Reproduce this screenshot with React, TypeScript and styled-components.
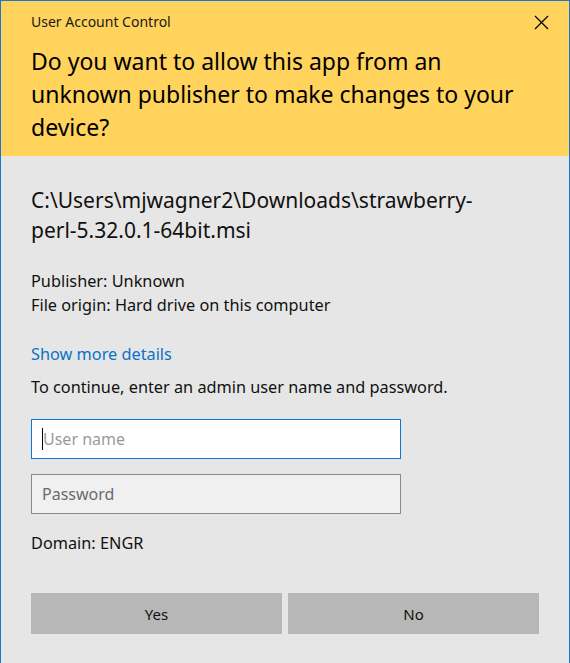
import React from "react";
import styled, { createGlobalStyle } from "styled-components";

const Global = createGlobalStyle`
  html, body { margin: 0; padding: 0; background: #e6e6e6; }
  * { box-sizing: border-box; }
  body { font-family: "Noto Sans", "Open Sans", sans-serif; color: #000; }
`;

const Window = styled.div`
  width: 570px;
  height: 663px;
  border: 1px solid #1979ca;
  border-bottom: none;
  background: #e6e6e6;
  display: flex;
  flex-direction: column;
  overflow: hidden;
`;

const Header = styled.header`
  background: #ffd35c;
  padding: 11px 20px 13px 30px;
  height: 155px;
  display: flex;
  flex-direction: column;
`;

const TitleRow = styled.div`
  display: flex;
  align-items: center;
  justify-content: space-between;
  height: 20px;
`;

const Title = styled.div`
  font-size: 14px;
  line-height: 20px;
  color: #1a1a1a;
`;

const Close = styled.button`
  all: unset;
  width: 16px;
  height: 16px;
  display: flex;
  align-items: center;
  justify-content: center;
`;

const Heading = styled.h1`
  margin: 13px 0 0 0;
  max-width: 495px;
  font-weight: 400;
  font-size: 23px;
  line-height: 33px;
  color: #000;
`;

const Body = styled.main`
  padding: 29px 30px 0 30px;
  display: flex;
  flex-direction: column;
`;

const Path = styled.div`
  font-size: 21px;
  line-height: 30px;
  color: #111;
`;

const Info = styled.div<{ $top: number }>`
  margin-top: ${(p) => p.$top}px;
  font-size: 16.3px;
  line-height: 24px;
  color: #111;
`;

const Link = styled.a`
  display: block;
  margin-top: 25px;
  font-size: 16.3px;
  line-height: 24px;
  color: #0a72c8;
  text-decoration: none;
  cursor: pointer;
`;

const Field = styled.div<{ $focused?: boolean }>`
  width: 370px;
  height: 40px;
  margin-top: ${(p) => (p.$focused ? "20px" : "15px")};
  background: ${(p) => (p.$focused ? "#ffffff" : "#f0f0f0")};
  border: ${(p) => (p.$focused ? "1.5px solid #0a78d4" : "1px solid #8a8a8a")};
  display: flex;
  align-items: center;
  padding-left: 10px;
  font-size: 16px;
  color: ${(p) => (p.$focused ? "#9b9b9b" : "#6b6b6b")};
`;

const Caret = styled.span`
  width: 1px;
  height: 22px;
  background: #000;
`;

const Buttons = styled.div`
  margin-top: 38px;
  display: grid;
  grid-template-columns: 251px 251px;
  gap: 6px;
`;

const Button = styled.button`
  height: 41px;
  border: none;
  background: #b7b7b7;
  font-family: inherit;
  font-size: 15px;
  color: #111;
`;

export default function App() {
  return (
    <>
      <Global />
      <Window>
        <Header>
          <TitleRow>
            <Title>User Account Control</Title>
            <Close aria-label="Close">
              <svg width="15" height="15" viewBox="0 0 15 15">
                <path d="M1 1 L14 14 M14 1 L1 14" stroke="#000" strokeWidth="1.2" />
              </svg>
            </Close>
          </TitleRow>
          <Heading>
            Do you want to allow this app from an unknown publisher to make changes to your device?
          </Heading>
        </Header>
        <Body>
          <Path>
            C:\Users\mjwagner2\Downloads\strawberry-
            <br />
            perl-5.32.0.1-64bit.msi
          </Path>
          <Info $top={24}>
            Publisher: Unknown
            <br />
            File origin: Hard drive on this computer
          </Info>
          <Link>Show more details</Link>
          <Info $top={9}>To continue, enter an admin user name and password.</Info>
          <Field $focused>
            <Caret />
            User name
          </Field>
          <Field>Password</Field>
          <Info $top={17}>Domain: ENGR</Info>
          <Buttons>
            <Button>Yes</Button>
            <Button>No</Button>
          </Buttons>
        </Body>
      </Window>
    </>
  );
}
